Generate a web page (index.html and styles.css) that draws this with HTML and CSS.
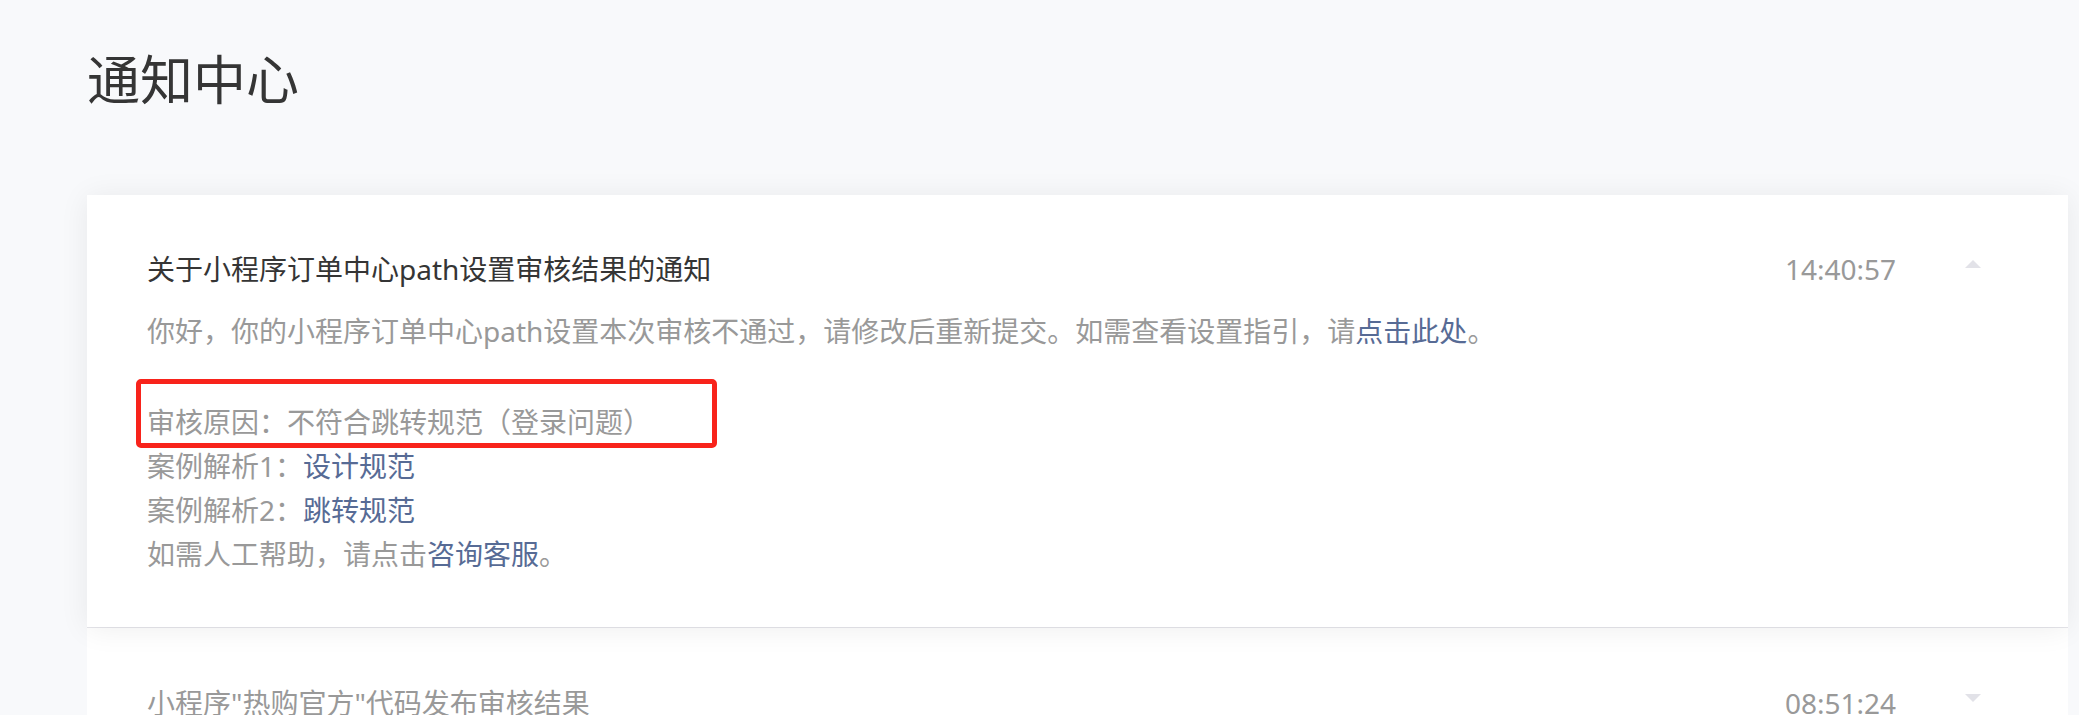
FILE: index.html
```html
<!DOCTYPE html>
<html>
<head>
  <meta charset="utf-8">
  <meta name="viewport" content="width=device-width">
  <link rel="stylesheet" href="styles.css">
</head>
<body>

<div class="page">
  <div class="page-head">
    <h1 class="page-title">通知中心</h1>
  </div>

  <div class="notice-list">

    <div class="notice is-open">
      <div class="notice-head">
        <div class="notice-title">关于小程序订单中心path设置审核结果的通知</div>
        <div class="notice-time">14:40:57</div>
        <span class="notice-arrow up"></span>
      </div>
      <div class="notice-body">
        <p class="notice-text">你好，你的小程序订单中心path设置本次审核不通过，请修改后重新提交。如需查看设置指引，请<a href="#" class="link">点击此处</a>。</p>
        <div class="notice-detail">
          <p class="notice-text">审核原因：不符合跳转规范（登录问题）</p>
          <p class="notice-text">案例解析1：<a href="#" class="link">设计规范</a></p>
          <p class="notice-text">案例解析2：<a href="#" class="link">跳转规范</a></p>
          <p class="notice-text">如需人工帮助，请点击<a href="#" class="link">咨询客服</a>。</p>
        </div>
      </div>
      <!-- annotation box -->
      <div class="mark"></div>
    </div>

    <div class="notice is-read">
      <div class="notice-head">
        <div class="notice-title">小程序"热购官方"代码发布审核结果</div>
        <div class="notice-time">08:51:24</div>
        <span class="notice-arrow down"></span>
      </div>
    </div>

  </div>
</div>

</body>
</html>
```

FILE: styles.css
```css
body {
  margin: 0;
  background-color: #f8f9fb;
  font-family: "Noto Sans", "Noto Sans CJK SC", sans-serif;
  color: #353535;
}

.page {
  padding: 0 11px 0 87px;
}

.page-head {
  padding: 43px 0 78px;
}

.page-title {
  margin: 0;
  font-size: 53px;
  line-height: 74px;
  font-weight: 400;
  color: #353535;
}

.notice {
  position: relative;
  background-color: #fff;
  padding: 52px 0 0 60px;
}

.notice.is-open {
  z-index: 2;
  padding-bottom: 51px;
  box-shadow: 0 2px 28px rgba(0, 0, 0, 0.07);
}

.notice.is-read {
  border-top: 1px solid #e6e6eb;
  padding-top: 53px;
  padding-bottom: 40px;
}

.notice-head {
  display: flex;
  align-items: center;
  padding-right: 87px;
  font-size: 28px;
  line-height: 44px;
}

.notice-title {
  flex: 1;
  color: #353535;
}

.is-read .notice-title {
  color: #999;
}

.notice-time {
  color: #999;
}

.notice-arrow {
  width: 0;
  height: 0;
  margin-left: 69px;
  margin-bottom: 10px;
  border-left: 8px solid transparent;
  border-right: 8px solid transparent;
}

.notice-arrow.up {
  border-bottom: 8px solid #e2e2e8;
}

.notice-arrow.down {
  border-top: 8px solid #e2e2e8;
}

.notice-body {
  margin-top: 18px;
  padding-right: 87px;
}

.notice-text {
  margin: 0;
  font-size: 28px;
  line-height: 44px;
  color: #999;
}

.notice-detail {
  margin-top: 47px;
}

.link {
  color: #576b95;
  text-decoration: none;
}

.mark {
  position: absolute;
  left: 49px;
  top: 184px;
  width: 571px;
  height: 59px;
  border: 5px solid #f8231b;
  border-radius: 5px;
}
```
